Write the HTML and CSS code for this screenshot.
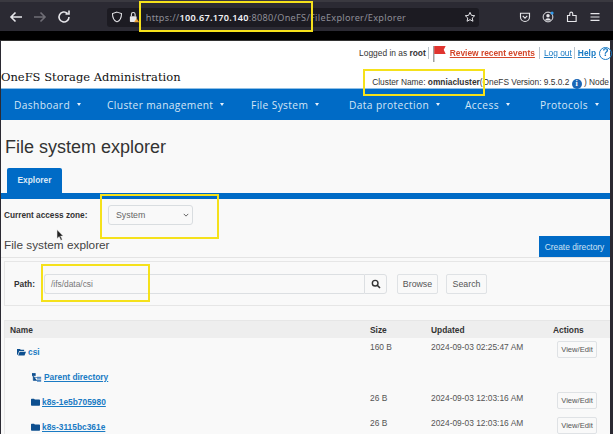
FILE: index.html
```html
<!DOCTYPE html>
<html lang="en">
<head>
<meta charset="utf-8">
<title>File system explorer</title>
<link rel="stylesheet" href="styles.css">
</head>
<body>
<div class="screen">
  <div class="chrome">
    <div class="nav-icons">
      <svg class="ic" viewBox="0 0 16 16"><path d="M14 8H3M7.500 3.500 3 8l4.500 4.500" fill="none" stroke="#e6e6ea" stroke-width="1.600"/></svg>
      <svg class="ic" viewBox="0 0 16 16"><path d="M2 8h11M8.500 3.500 13 8l-4.500 4.500" fill="none" stroke="#6f6e76" stroke-width="1.600"/></svg>
      <svg class="ic" viewBox="0 0 16 16"><path d="M13 8a5 5 0 1 1-1.600-3.700M13 1.500v3.500H9.500" fill="none" stroke="#e6e6ea" stroke-width="1.600"/></svg>
    </div>
    <div class="urlbar">
      <svg class="ic-s" viewBox="0 0 16 16"><path d="M8 1.500 14 3.500c0 5-1.500 9-6 11-4.500-2-6-6-6-11z" fill="none" stroke="#e6e6ea" stroke-width="1.400"/></svg>
      <svg class="ic-s" viewBox="0 0 16 16"><rect x="2.500" y="7" width="9" height="7.500" rx="1" fill="#e6e6ea"/><path d="M4.500 7V4.500a2.500 2.500 0 0 1 5 0V7" fill="none" stroke="#e6e6ea" stroke-width="1.400"/><path d="M11.500 10 15 15h-7z" fill="#e9a23b"/></svg>
      <span class="url"><span class="dim">https://</span>100.67.170.140<span class="dim">:8080/OneFS/FileExplorer/Explorer</span></span>
      <svg class="ic-s star" viewBox="0 0 16 16"><path d="m8 1.800 1.900 4 4.400.5-3.300 3 .9 4.400L8 11.500l-3.900 2.200.9-4.400-3.300-3 4.400-.5z" fill="none" stroke="#e6e6ea" stroke-width="1.300"/></svg>
    </div>
    <div class="tools">
      <svg class="ic-s" viewBox="0 0 16 16"><path d="M2 3h12v5a6 6 0 0 1-12 0z" fill="none" stroke="#e6e6ea" stroke-width="1.500"/><path d="m5 6.500 3 3 3-3" fill="none" stroke="#e6e6ea" stroke-width="1.500"/></svg>
      <svg class="ic-s" viewBox="0 0 16 16"><circle cx="8" cy="8" r="6.500" fill="none" stroke="#e6e6ea" stroke-width="1.300"/><circle cx="8" cy="6.300" r="2.300" fill="#e6e6ea"/><path d="M3.800 12.500a4.500 4.500 0 0 1 8.400 0z" fill="#e6e6ea"/><circle cx="13.500" cy="2.500" r="2" fill="#2f9bf0"/></svg>
      <svg class="ic-s" viewBox="0 0 16 16"><path d="M2 6h3V3.500a2 2 0 0 1 4 0V6h4.500v8H2z" fill="none" stroke="#e6e6ea" stroke-width="1.500"/></svg>
      <svg class="ic-s" viewBox="0 0 16 16"><path d="M2 3.500h12M2 8h12M2 12.500h12" stroke="#e6e6ea" stroke-width="1.600"/></svg>
    </div>
  </div>
  <div class="gap"></div>

  <div class="page">
    <header class="head">
      <div class="userline">
        <span>Logged in as <b>root</b></span>
        <i class="sep s1"></i>
        <svg class="flag" viewBox="0 0 16 20"><path d="M2.500 2v17" stroke="#9a9a9a" stroke-width="1.500"/><path d="M3 2h12l-2 4 2 4.500H3z" fill="#e0342f"/></svg>
        <a class="events" href="#">Review recent events</a>
        <i class="sep"></i>
        <a href="#">Log out</a>
        <i class="sep s2"></i>
        <a class="help" href="#">Help</a>
        <span class="qmark">?</span>
      </div>
      <div class="titleline">
        <span class="brand">OneFS Storage Administration</span>
        <span class="cluster">Cluster Name: <b>omniacluster</b>(OneFS Version: 9.5.0.2 <span class="info">i</span> ) Node</span>
      </div>
    </header>

    <nav class="menu">
      <span class="mi m1">Dashboard<i class="caret"></i></span>
      <span class="mi m2">Cluster management<i class="caret"></i></span>
      <span class="mi m3">File System<i class="caret"></i></span>
      <span class="mi m4">Data protection<i class="caret"></i></span>
      <span class="mi m5">Access<i class="caret"></i></span>
      <span class="mi">Protocols<i class="caret"></i></span>
    </nav>

    <h1 class="title">File system explorer</h1>
    <div class="tabs"><span class="tab">Explorer</span></div>

    <div class="zone">
      <label class="zone-label">Current access zone:</label>
      <div class="select">System<svg class="chev" viewBox="0 0 8 8"><path d="m1 2.500 3 3 3-3" fill="none" stroke="#555" stroke-width="1.200"/></svg></div>
    </div>

    <div class="section">
      <h2 class="subtitle">File system explorer</h2>
      <button class="primary">Create directory</button>
    </div>

    <div class="panel">
      <label class="path-label">Path:</label>
      <div class="input">/ifs/data/csi</div>
      <div class="addon"><svg viewBox="0 0 12 12" class="mag"><circle cx="5" cy="5" r="3.400" fill="none" stroke="#333" stroke-width="1.700"/><path d="m7.500 7.500 3.300 3.300" stroke="#333" stroke-width="1.900"/></svg></div>
      <button class="btn browse">Browse</button>
      <button class="btn">Search</button>
    </div>

    <div class="table">
      <div class="row thead"><span>Name</span><span>Size</span><span>Updated</span><span>Actions</span></div>
      <div class="row r1">
        <span class="name l0"><svg class="folder" viewBox="0 0 12 10"><path d="M0 1h4l1 1h4.500v1.500H3L1 8.500H0zM3.500 4.500H12L10 9.500H1.500z" fill="#0d4f8f"/></svg><a class="plain" href="#">csi</a></span>
        <span>160 B</span><span>2024-09-03 02:25:47 AM</span><span><button class="btn small">View/Edit</button></span>
      </div>
      <div class="row r2">
        <span class="name l1"><svg class="folder tree" viewBox="0 0 12 10"><path d="M0 0h4v3H0zM1.500 3v5.500H6M1.500 5H6" fill="#0d4f8f" stroke="#0d4f8f" stroke-width=".7"/><path d="M6 4h5v2.500H6zM6 7.500h5V10H6z" fill="#4b85c0"/></svg><a href="#">Parent directory</a></span>
        <span></span><span></span><span></span>
      </div>
      <div class="row">
        <span class="name l2"><svg class="folder" viewBox="0 0 12 10"><path d="M0 1.500a1 1 0 0 1 1-1h3l1.200 1.200H11a1 1 0 0 1 1 1V9a1 1 0 0 1-1 1H1a1 1 0 0 1-1-1z" fill="#0d4f8f"/></svg><a href="#">k8s-1e5b705980</a></span>
        <span>26 B</span><span>2024-09-03 12:03:16 AM</span><span><button class="btn small">View/Edit</button></span>
      </div>
      <div class="row">
        <span class="name l2"><svg class="folder" viewBox="0 0 12 10"><path d="M0 1.500a1 1 0 0 1 1-1h3l1.200 1.200H11a1 1 0 0 1 1 1V9a1 1 0 0 1-1 1H1a1 1 0 0 1-1-1z" fill="#0d4f8f"/></svg><a href="#">k8s-3115bc361e</a></span>
        <span>26 B</span><span>2024-09-03 12:03:16 AM</span><span><button class="btn small">View/Edit</button></span>
      </div>
    </div>
  </div>

  <i class="mark mark-url"></i>
  <i class="mark mark-cluster"></i>
  <i class="mark mark-zone"></i>
  <i class="mark mark-path"></i>
  <svg class="cursor" viewBox="0 0 10 14"><path d="M1 1v10l2.500-2.200L5.500 13l1.500-.7-2-4.100H8z" fill="#222" stroke="#ddd" stroke-width=".5"/></svg>
</div>
</body>
</html>
```
FILE: styles.css
```css
* { box-sizing: border-box; }
html, body { margin: 0; padding: 0; height: 100%; overflow: hidden; background: #2b2a33; }
.screen { position: relative; width: 613px; height: 434px; overflow: hidden; font-family: "Liberation Sans", Arial, sans-serif; color: #333; filter: blur(0.4px); }

.chrome { height: 31px; background: #2b2a33; border-top: 2px solid #3a3940; display: flex; align-items: center; padding: 1px 12px 0 8px; }
.nav-icons { display: flex; gap: 8px; width: 99px; }
.ic { width: 16px; height: 16px; }
.ic-s { width: 12px; height: 12px; flex: none; }
.urlbar { width: 373px; height: 19px; background: #1c1b22; border-radius: 3px; display: flex; align-items: center; gap: 5px; padding: 0 3px 0 4px; }
.url { font: 9.150px "Noto Sans", sans-serif; color: #f2f2f4; font-weight: 600; letter-spacing: .3px; margin-left: 1px; flex: 1; white-space: nowrap; }
.dim { color: #8f8f98; font-weight: 400; }
.tools { display: flex; gap: 11.500px; margin-left: 40px; }

.gap { height: 9px; background: #000; }

.page { margin: 0 3px 0 1px; height: 394px; background: #f9f9f9; border-top: 1px solid #333; }
.head { height: 47px; background: #fff; padding-top: 4px; }
.userline { display: flex; align-items: center; justify-content: flex-end; height: 16px; font-size: 8.400px; color: #333; gap: 2px; margin-right: -2px; white-space: nowrap; }
.userline a { color: #1a7bc4; text-decoration: underline; font-weight: 400; margin: 0 1px; }
.userline a.events { color: #d4472a; font-weight: 700; }
.userline a.help { font-weight: 700; }
.sep { width: 1px; height: 12px; background: #b9c3cc; margin: 0 1px; }
.s1 { margin: 0; }
.s2 { margin: 0 -.5px; }
.flag { width: 16px; height: 19px; }
.qmark { width: 13px; height: 13px; border: 1.500px solid #1a7bc4; border-radius: 50%; color: #1a7bc4; font-size: 10px; font-weight: 700; text-align: center; line-height: 10px; flex: none; overflow: hidden; }
.titleline { display: flex; justify-content: space-between; height: 27px; padding-top: 9px; white-space: nowrap; }
.brand { font: 11.500px/14px "DejaVu Serif", serif; color: #111; }
.cluster { font-size: 8.350px; line-height: 12px; color: #333; margin: 6px 1px 0 0; }
.info { display: inline-block; width: 10px; height: 10px; border-radius: 50%; background: #1b66b5; color: #fff; font: 700 8px/10px "Liberation Serif", serif; text-align: center; vertical-align: -1px; }

.menu { height: 32px; background: #006bc6; border-top: 1px solid #8fbfe6; display: flex; align-items: center; padding: 0 0 0 13px; color: #d5e6f6; font: 10.200px "Open Sans", sans-serif; letter-spacing: .38px; white-space: nowrap; }
.mi { display: inline-flex; align-items: center; }
.caret { display: inline-block; margin-left: 7px; border-left: 2.500px solid transparent; border-right: 2.500px solid transparent; border-top: 3px solid #e6f0fa; }
.m1 { width: 93px; }
.m2 { width: 144px; }
.m3 { width: 98px; }
.m4 { width: 116px; }
.m5 { width: 75px; }

.title { margin: 17px 0 0 4px; font: 400 18px/20px "Liberation Sans", sans-serif; color: #333; }
.tabs { margin-top: 11px; height: 31px; border-bottom: 6px solid #006bc6; padding-left: 6px; }
.tab { display: block; width: 55px; height: 25px; background: #006bc6; border-radius: 2px 2px 0 0; color: #dbe9f6; font-size: 8.400px; font-weight: 700; text-align: center; line-height: 24px; }

.zone { display: flex; align-items: center; height: 20px; margin-top: 6px; padding-left: 3px; }
.zone-label { width: 104px; font-size: 8.250px; font-weight: 700; color: #333; white-space: nowrap; }
.select { width: 85px; height: 20px; border: 1px solid #d9dde0; border-radius: 3px; background: #f9f9f9; color: #666; font-size: 8.800px; line-height: 18px; display: flex; align-items: center; justify-content: space-between; padding: 0 3px 0 7px; }
.chev { width: 6px; height: 6px; }

.section { display: flex; justify-content: space-between; align-items: flex-end; height: 33px; padding-left: 3px; border-bottom: 1px solid #e4e4e4; }
.subtitle { margin: 0 0 4px; font: 400 11.800px/15px "Liberation Sans", sans-serif; color: #444; }
.primary { width: 71px; height: 21px; background: #006bc6; color: #cfe2f4; border: 0; font: 8.400px "Liberation Sans", sans-serif; padding: 0; }

.panel { display: flex; align-items: center; margin: 3px 0 0 3px; height: 45px; padding-left: 9px; border: 1px solid #e6e6e6; border-right: 0; white-space: nowrap; }
.path-label { width: 30px; font-size: 8.400px; font-weight: 700; color: #333; }
.input { width: 320px; height: 20px; border: 1px solid #dcdfe2; border-right: 0; border-radius: 3px 0 0 3px; background: #f9f9f9; color: #777; font-size: 8.400px; line-height: 18px; padding-left: 6px; }
.addon { width: 23px; height: 20px; border: 1px solid #dcdfe2; border-radius: 0 3px 3px 0; display: flex; align-items: center; justify-content: center; }
.mag { width: 10px; height: 10px; }
.btn { height: 20px; width: 41px; padding: 0; border: 1px solid #dfe2e5; border-radius: 2px; background: #f9f9f9; color: #555; font: 8.800px "Liberation Sans", sans-serif; margin-left: 10px; }
.browse { margin-right: -2px; }

.table { margin: 14px 0 0 3px; border-left: 1px solid #e8e8e8; font-size: 8.400px; color: #555; }
.row { display: grid; grid-template-columns: 364px 61px 121px 1fr; height: 25px; padding-top: 4px; line-height: 10px; }
.row > span { padding-left: 1px; white-space: nowrap; }
.row > span:last-child { padding-left: 2px; }
.thead { height: 18px; background: #eee; border-top: 1px solid #e6e6e6; padding-top: 4px; font-weight: 700; color: #333; }
.thead > span:first-child { padding-left: 5px; }
.r1 { height: 26px; }
.name { display: flex; align-items: center; height: 20px; font-weight: 700; color: #1a7bc4; }
.row .l0 { padding-left: 12px; }
.row .l1 { padding-left: 27px; margin-top: -1px; }
.row .l2 { padding-left: 26px; margin-top: -1px; }
.folder { width: 9px; height: 8px; margin-right: 2px; flex: none; }
.tree { width: 10px; height: 9px; }
.name a { color: #1a7bc4; text-decoration: underline; }
.name a.plain { text-decoration: none; }
.small { width: 40px; height: 17px; margin: -1px 0 0 4px; font-size: 7.600px; color: #555; }

.mark { position: absolute; border: 2px solid #f5e11b; }
.mark-url { left: 139px; top: 1px; width: 174px; height: 31px; }
.mark-cluster { left: 363px; top: 69px; width: 122px; height: 27px; }
.mark-zone { left: 100px; top: 194px; width: 119px; height: 45px; }
.mark-path { left: 41px; top: 264px; width: 109px; height: 38px; }
.cursor { position: absolute; left: 56px; top: 229px; width: 9px; height: 12px; }
```
